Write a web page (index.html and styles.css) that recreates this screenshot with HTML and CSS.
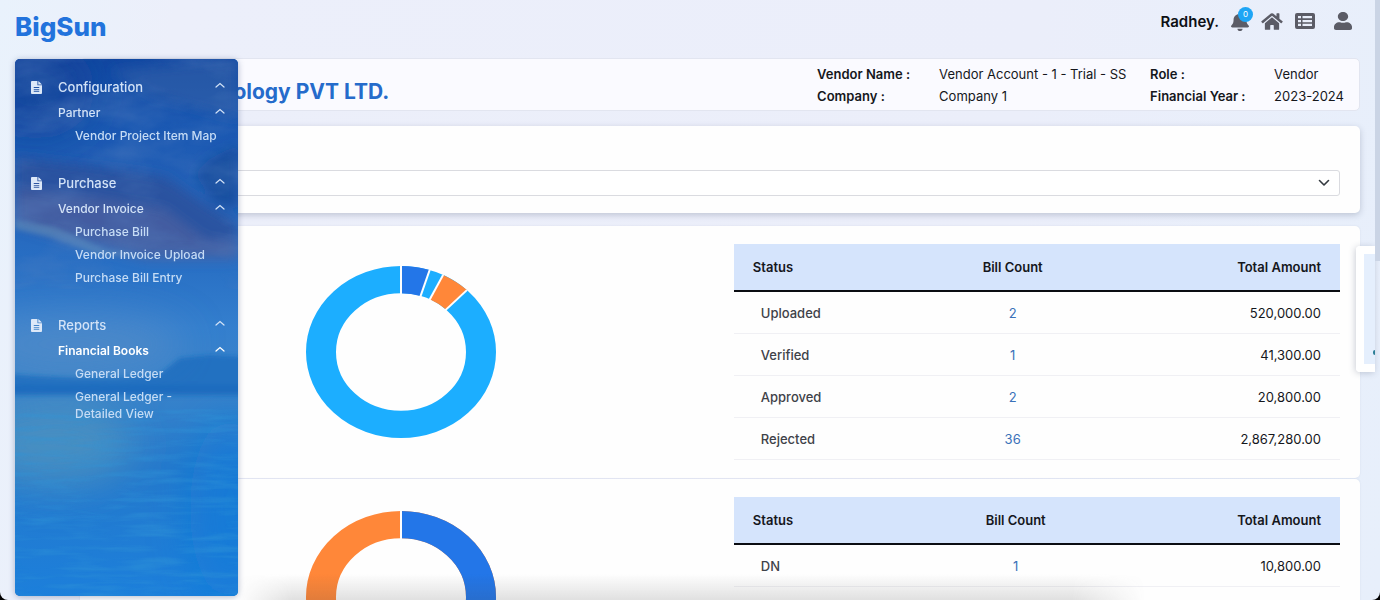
FILE: index.html
```html
<!DOCTYPE html>
<html lang="en">
<head>
  <meta charset="UTF-8">
  <meta name="viewport" content="width=device-width, initial-scale=1.0">
  <title>BigSun - Vendor Dashboard</title>
  <link rel="stylesheet" href="styles.css">
</head>
<body>
  <svg class="sprite" aria-hidden="true">
    <symbol id="file" viewBox="0 0 12 14">
      <path fill-rule="evenodd" d="M1 0H7V4.500H12V13a1 1 0 0 1-1 1H1a1 1 0 0 1-1-1V1a1 1 0 0 1 1-1zM3 6.500V7.500H9V6.500zM3 8.500V9.500H9V8.500zM3 10.500V11.500H9V10.500z"/>
      <path d="M8 0L12 3.700H8z"/>
    </symbol>
    <symbol id="up" viewBox="0 0 10 6">
      <path d="M1 5L5 1.500L9 5" fill="none" stroke="currentColor" stroke-width="1.200" stroke-linecap="round"/>
    </symbol>
  </svg>

  <div class="app">
    <header class="topbar">
      <a class="brand" href="#">BigSun</a>
      <div class="tools">
        <span class="user-name">Radhey.</span>
        <button class="tool bell" aria-label="Notifications">
          <svg width="18" height="19" viewBox="0 0 448 512" preserveAspectRatio="none"><path d="M224 512c35.320 0 63.970-28.650 63.970-64H160.030c0 35.350 28.650 64 63.970 64zm215.390-149.710c-19.320-20.760-55.470-51.990-55.470-154.290 0-77.700-54.480-139.900-127.940-155.160V32c0-17.670-14.320-32-31.980-32s-31.980 14.330-31.980 32v20.840C118.560 68.100 64.080 130.300 64.080 208c0 102.300-36.150 133.530-55.470 154.290-6 6.450-8.660 14.160-8.610 21.710.11 16.400 12.980 32 32.100 32h383.800c19.120 0 32-15.600 32.100-32 .05-7.550-2.610-15.270-8.610-21.710z"/></svg>
          <span class="badge">0</span>
        </button>
        <button class="tool" aria-label="Home">
          <svg width="22" height="19" viewBox="0 0 576 512"><path d="M280.370 148.260L96 300.110V464a16 16 0 0 0 16 16l112.060-.29a16 16 0 0 0 15.920-16V368a16 16 0 0 1 16-16h64a16 16 0 0 1 16 16v95.640a16 16 0 0 0 16 16.050L464 480a16 16 0 0 0 16-16V300L295.670 148.260a12.190 12.190 0 0 0-15.300 0zM571.600 251.470L488 182.560V44.050a12 12 0 0 0-12-12h-56a12 12 0 0 0-12 12v72.610L318.470 43a48 48 0 0 0-61 0L4.340 251.470a12 12 0 0 0-1.600 16.900l25.500 31A12 12 0 0 0 45.150 301l235.220-193.740a12.190 12.190 0 0 1 15.300 0L530.900 301a12 12 0 0 0 16.900-1.600l25.500-31a12 12 0 0 0-1.700-16.930z"/></svg>
        </button>
        <button class="tool" aria-label="List">
          <svg width="20" height="16" viewBox="0 0 20 16"><path fill-rule="evenodd" d="M2 0H18a2 2 0 0 1 2 2V14a2 2 0 0 1-2 2H2a2 2 0 0 1-2-2V2a2 2 0 0 1 2-2zM3 3V5.300H6V3zM7.500 3V5.300H17V3zM3 6.900V9.200H6V6.900zM7.500 6.900V9.200H17V6.900zM3 10.800V13H6V10.800zM7.500 10.800V13H17V10.800z"/></svg>
        </button>
        <button class="tool profile" aria-label="Profile">
          <svg width="18" height="18" viewBox="0 0 448 512" preserveAspectRatio="none"><path d="M224 256c70.700 0 128-57.300 128-128S294.700 0 224 0 96 57.300 96 128s57.300 128 128 128zm89.600 32h-16.700c-22.200 10.200-46.900 16-72.900 16s-50.600-5.800-72.900-16h-16.700C60.200 288 0 348.200 0 422.400V464c0 26.500 21.500 48 48 48h352c26.500 0 48-21.500 48-48v-41.600c0-74.200-60.200-134.400-134.400-134.400z"/></svg>
        </button>
      </div>
    </header>

    <nav class="sidebar" aria-label="Main menu">
      <svg class="scene" viewBox="0 0 223 537" preserveAspectRatio="none" aria-hidden="true">
        <defs>
          <linearGradient id="sky" x1="0" y1="0" x2="0" y2="1">
            <stop offset="0" stop-color="#1248a2"/>
            <stop offset=".12" stop-color="#1a58b2"/>
            <stop offset=".25" stop-color="#2562b8"/>
            <stop offset=".38" stop-color="#286fc4"/>
            <stop offset=".5" stop-color="#347fce"/>
            <stop offset=".6" stop-color="#3b84ca"/>
            <stop offset=".76" stop-color="#2579cc"/>
            <stop offset="1" stop-color="#1c7fdb"/>
          </linearGradient>
          <filter id="haze" x="-60%" y="-60%" width="220%" height="220%"><feGaussianBlur stdDeviation="20"/></filter>
          <filter id="soft" x="-30%" y="-60%" width="160%" height="220%"><feGaussianBlur stdDeviation="6"/></filter>
          <filter id="edge" x="-10%" y="-30%" width="120%" height="160%"><feGaussianBlur stdDeviation="2"/></filter>
          <filter id="waves" x="0" y="0" width="100%" height="100%">
            <feTurbulence type="fractalNoise" baseFrequency=".018 .16" numOctaves="3" seed="4"/>
            <feColorMatrix values="0 0 0 0 .03  0 0 0 0 .3  0 0 0 0 .68  2.400 0 0 0 -1"/>
          </filter>
          <filter id="clouds" x="0" y="0" width="100%" height="100%">
            <feTurbulence type="fractalNoise" baseFrequency=".014 .03" numOctaves="4" seed="11"/>
            <feColorMatrix values="0 0 0 0 .1  0 0 0 0 .22  0 0 0 0 .52  1.800 0 0 0 -.75"/>
          </filter>
        </defs>
        <rect width="223" height="537" fill="url(#sky)"/>
        <g filter="url(#haze)">
          <ellipse cx="20" cy="30" rx="60" ry="50" fill="#123f95" opacity=".6"/>
          <ellipse cx="60" cy="285" rx="110" ry="30" fill="#5a90c6" opacity=".6"/>
          <ellipse cx="40" cy="385" rx="80" ry="42" fill="#4f94bf" opacity=".8"/>
          <ellipse cx="215" cy="450" rx="40" ry="90" fill="#117ad8" opacity=".7"/>
        </g>
        <g filter="url(#soft)">
          <path d="M95 12L223 0V60L140 38z" fill="#3763a8" opacity=".5"/>
          <path d="M223 85L195 100L180 115L200 145L223 150z" fill="#124796" opacity=".7"/>
          <path d="M0 98L60 105L115 112L150 118L190 145L223 165V192L130 185L0 165z" fill="#2a4f9a" opacity=".8"/>
          <path d="M0 130L90 140L150 150L190 180L223 185V200L130 200L50 180L0 165z" fill="#4c62a0" opacity=".75"/>
        </g>
        <path d="M0 160L40 168L90 190L140 199L80 195L35 178L0 170z" fill="#6594bd" opacity=".5" filter="url(#edge)"/>
        <rect width="223" height="230" filter="url(#clouds)" opacity=".45"/>
        <g filter="url(#edge)">
          <path d="M-5 315C50 320 120 320 145 315L165 299L195 296L228 298V334H-5z" fill="#176bbd" opacity=".75"/>
          <path d="M-5 326H228V337H-5z" fill="#1365bb" opacity=".5"/>
        </g>
        <rect y="350" width="223" height="187" filter="url(#waves)" opacity=".45"/>
      </svg>

      <ul class="menu">
        <li class="group">
          <button class="head"><svg class="doc"><use href="#file"/></svg>Configuration<svg class="chev"><use href="#up"/></svg></button>
          <button class="sub">Partner<svg class="chev"><use href="#up"/></svg></button>
          <a class="leaf" href="#">Vendor Project Item Map</a>
        </li>
        <li class="group">
          <button class="head"><svg class="doc"><use href="#file"/></svg>Purchase<svg class="chev"><use href="#up"/></svg></button>
          <button class="sub">Vendor Invoice<svg class="chev"><use href="#up"/></svg></button>
          <a class="leaf" href="#">Purchase Bill</a>
          <a class="leaf" href="#">Vendor Invoice Upload</a>
          <a class="leaf" href="#">Purchase Bill Entry</a>
        </li>
        <li class="group">
          <button class="head"><svg class="doc"><use href="#file"/></svg>Reports<svg class="chev"><use href="#up"/></svg></button>
          <button class="sub active">Financial Books<svg class="chev"><use href="#up"/></svg></button>
          <a class="leaf" href="#">General Ledger</a>
          <a class="leaf" href="#">General Ledger - Detailed View</a>
        </li>
      </ul>
    </nav>

    <main class="content">
      <section class="company">
        <h1>Technology PVT LTD.</h1>
        <dl class="info">
          <dt>Vendor Name :</dt><dd>Vendor Account - 1 - Trial - SS</dd>
          <dt>Role :</dt><dd>Vendor</dd>
          <dt>Company :</dt><dd>Company 1</dd>
          <dt>Financial Year :</dt><dd>2023-2024</dd>
        </dl>
      </section>

      <section class="filter">
        <label for="project">Project</label>
        <div class="select-box">
          <select id="project"><option></option></select>
          <svg class="arrow" viewBox="0 0 12 8" aria-hidden="true"><path d="M1.500 1.500L6 6L10.500 1.500" fill="none" stroke="#343a40" stroke-width="1.600" stroke-linecap="round" stroke-linejoin="round"/></svg>
        </div>
      </section>

      <section class="panel">
        <svg class="donut" viewBox="0 0 190 190" preserveAspectRatio="none" role="img" aria-label="Bills by status">
          <g class="ring" transform="rotate(-90 95 95)">
            <circle class="sky" cx="95" cy="95" r="80"/>
            <circle class="blue" cx="95" cy="95" r="80" pathLength="41" stroke-dasharray="2 39"/>
            <circle class="orange" cx="95" cy="95" r="80" pathLength="41" stroke-dasharray="2 39" stroke-dashoffset="-3"/>
          </g>
          <g class="split">
            <path d="M95 0V34"/>
            <path d="M95 0V34" transform="rotate(17.560 95 95)"/>
            <path d="M95 0V34" transform="rotate(26.340 95 95)"/>
            <path d="M95 0V34" transform="rotate(43.900 95 95)"/>
          </g>
        </svg>
        <table class="bills">
          <thead>
            <tr><th>Status</th><th>Bill Count</th><th>Total Amount</th></tr>
          </thead>
          <tbody>
            <tr><td>Uploaded</td><td><a href="#">2</a></td><td>520,000.00</td></tr>
            <tr><td>Verified</td><td><a href="#">1</a></td><td>41,300.00</td></tr>
            <tr><td>Approved</td><td><a href="#">2</a></td><td>20,800.00</td></tr>
            <tr><td>Rejected</td><td><a href="#">36</a></td><td>2,867,280.00</td></tr>
          </tbody>
        </table>
      </section>

      <section class="panel notes">
        <svg class="donut" viewBox="0 0 190 190" preserveAspectRatio="none" role="img" aria-label="Notes by status">
          <g class="ring" transform="rotate(-90 95 95)">
            <circle class="orange" cx="95" cy="95" r="80"/>
            <circle class="blue" cx="95" cy="95" r="80" pathLength="2" stroke-dasharray="1 1"/>
          </g>
          <g class="split"><path d="M95 0V34"/><path d="M95 156V190"/></g>
        </svg>
        <table class="bills">
          <thead>
            <tr><th>Status</th><th>Bill Count</th><th>Total Amount</th></tr>
          </thead>
          <tbody>
            <tr><td>DN</td><td><a href="#">1</a></td><td>10,800.00</td></tr>
          </tbody>
        </table>
      </section>
    </main>

    <div class="drawer"><span class="drawer-mark"></span></div>
    <div class="scroll-thumb"></div>
    <div class="bottom-shade"></div>
  </div>
</body>
</html>
```
FILE: styles.css
```css
* { box-sizing: border-box; }
html { background: #000; }
body {
  margin: 0;
  font-family: Inter, "Liberation Sans", sans-serif;
  font-size: 13px;
  color: #15171c;
}
button {
  border: none;
  background: none;
  padding: 0;
  font: inherit;
  color: inherit;
  cursor: pointer;
}
a { text-decoration: none; }
.sprite {
  position: absolute;
  width: 0;
  height: 0;
}
.app {
  position: relative;
  height: 100vh;
  overflow: hidden;
  background: linear-gradient(100deg, #e9f2fc, #eceffa 12%, #ebeefa 70%, #e7effb);
  border-radius: 0 0 8px 8px;
}

/* top bar */
.topbar {
  display: flex;
  justify-content: space-between;
  align-items: flex-start;
  height: 58px;
  padding: 10px 28px 0 15px;
}
.brand {
  font-size: 26px;
  line-height: 34px;
  font-weight: 800;
  color: #2273dc;
}
.tools {
  display: flex;
  align-items: center;
  gap: 12px;
  height: 22px;
}
.user-name {
  font-size: 15px;
  font-weight: 600;
  color: #0d0f14;
}
.tool {
  position: relative;
  display: flex;
  fill: #5b5c66;
}
.profile { margin-left: 7px; }
.badge {
  position: absolute;
  top: -5px;
  right: -4px;
  width: 15px;
  height: 15px;
  border-radius: 50%;
  background: #1ea5f5;
  color: #fff;
  font-size: 8px;
  line-height: 15px;
  text-align: center;
}

/* side menu, opens over the page */
.sidebar {
  position: absolute;
  z-index: 2;
  top: 59px;
  bottom: 4px;
  left: 15px;
  width: 223px;
  overflow: hidden;
  border-radius: 5px;
  background: #1c6cc4;
  box-shadow: 0 1px 6px rgba(40, 60, 110, .35);
}
.scene {
  position: absolute;
  width: 100%;
  height: 100%;
}
.menu {
  position: relative;
  display: flex;
  flex-direction: column;
  gap: 22px;
  margin: 0;
  padding: 14px 12px 0 16px;
  list-style: none;
  color: #d3e3f7;
}
.group {
  display: flex;
  flex-direction: column;
}
.head, .sub {
  display: flex;
  align-items: center;
  text-align: left;
  font-weight: 500;
}
.head { height: 28px; }
.sub {
  height: 23px;
  padding-left: 27px;
  font-size: 12px;
}
.sub.active {
  color: #fff;
  font-weight: 600;
}
.doc {
  width: 11px;
  height: 13px;
  margin-right: 16px;
  fill: #dce8f8;
}
.chev {
  width: 10px;
  height: 6px;
  margin: 0 1px 4px auto;
}
.leaf {
  padding: 3px 4px 3px 44px;
  line-height: 17px;
  font-weight: 500;
  font-size: 12px;
  color: #c6dcf5;
}

/* page */
.content {
  margin-left: 80px;
  margin-right: 20px;
}
.company, .filter, .panel {
  background: #fefefe;
  border-radius: 5px;
}
.company {
  display: flex;
  justify-content: space-between;
  margin-bottom: 15px;
  padding: 4px 15px 3px 89px;
  border: 1px solid #e2e5f0;
  background: #fafaff;
}
.company h1 {
  align-self: flex-end;
  margin: 0;
  font-size: 21px;
  line-height: 30px;
  font-weight: 700;
  color: #256bcb;
}
.info {
  display: grid;
  grid-template-columns: 122px 211px 124px auto;
  margin: 0;
  line-height: 22px;
}
.info dt { font-weight: 600; }
.info dd { margin: 0; }
.filter {
  margin-bottom: 13px;
  padding: 15px 20px 17px;
  box-shadow: 0 2px 6px rgba(60, 70, 100, .25);
}
.filter label {
  display: block;
  height: 29px;
}
.select-box { position: relative; }
.select-box select {
  display: block;
  width: 100%;
  height: 26px;
  appearance: none;
  border: 1px solid #dadbe0;
  border-radius: 3px;
  background: #fff;
  font: inherit;
}
.arrow {
  position: absolute;
  top: 9px;
  right: 10px;
  width: 12px;
  height: 8px;
  pointer-events: none;
}
.panel {
  display: grid;
  grid-template-columns: 18fr 17fr;
  column-gap: 12px;
  align-items: center;
  margin-bottom: 1px;
  padding: 18px 20px 18px 0;
  box-shadow: 0 0 2px rgba(60, 70, 100, .1);
}
.notes { min-height: 236px; }
.donut {
  justify-self: center;
  width: 190px;
  height: 172px;
}
.ring circle {
  fill: none;
  stroke-width: 30;
}
.ring .sky { stroke: #1caeff; }
.ring .blue { stroke: #2376e8; }
.ring .orange { stroke: #ff8739; }
.split path {
  stroke: #fefefe;
  stroke-width: 2;
}

/* tables */
.bills {
  align-self: start;
  width: 100%;
  table-layout: fixed;
  border-collapse: separate;
  border-spacing: 0;
}
.bills th {
  height: 48px;
  padding: 0 19px;
  background: #d5e4fc;
  border-bottom: 2px solid #0b0d12;
  font-weight: 600;
  text-align: left;
}
.bills td {
  height: 42px;
  padding: 0 19px 0 27px;
  border-bottom: 1px solid #f0f0f4;
}
.bills td:first-child { color: #3f4249; font-weight: 500; }
.bills th:first-child { width: 31%; }
.bills th:nth-child(2) { width: 30%; }
.notes .bills th:first-child { width: 32%; }
.notes .bills th:nth-child(2) { width: 29%; }
.bills th:nth-child(2), .bills td:nth-child(2) {
  padding: 0;
  text-align: center;
}
.bills th:last-child, .bills td:last-child { text-align: right; }
.bills a { color: #3b71b9; }

/* things over the page */
.drawer {
  position: absolute;
  top: 246px;
  right: 5px;
  width: 19px;
  height: 126px;
  border: 8px solid #fff;
  border-right: none;
  border-radius: 4px 0 0 4px;
  background: #e5effd;
  box-shadow: -1px 1px 6px rgba(60, 70, 100, .25);
}
.drawer-mark {
  position: absolute;
  right: 0;
  bottom: 9px;
  width: 2px;
  height: 5px;
  border-radius: 2px 0 0 2px;
  background: #2c7f97;
}
.scroll-thumb {
  position: absolute;
  top: 0;
  right: 0;
  width: 5px;
  height: 261px;
  background: #cad4e5;
}
.bottom-shade {
  position: absolute;
  right: 17%;
  bottom: 0;
  left: 238px;
  height: 26px;
  background: linear-gradient(rgba(70, 70, 70, 0), rgba(70, 70, 70, .16));
  -webkit-mask-image: linear-gradient(90deg, transparent, #000 6%, #000 92%, transparent);
  mask-image: linear-gradient(90deg, transparent, #000 6%, #000 92%, transparent);
  pointer-events: none;
}
```
